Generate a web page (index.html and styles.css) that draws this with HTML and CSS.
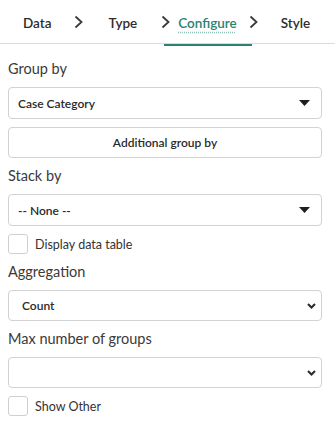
FILE: index.html
```html
<!DOCTYPE html>
<html lang="en">
<head>
  <meta charset="UTF-8">
  <title>Configure</title>
  <meta name="viewport" content="width=device-width, initial-scale=1.0">
  <link rel="stylesheet" href="styles.css">
</head>
<body>
  <nav class="steps">
    <span class="step">Data</span>
    <svg class="chev" width="9" height="14" viewBox="0 0 9 14"><path d="M1.5 1.5 L7.5 7 L1.5 12.5"/></svg>
    <span class="step">Type</span>
    <svg class="chev" width="9" height="14" viewBox="0 0 9 14"><path d="M1.5 1.5 L7.5 7 L1.5 12.5"/></svg>
    <span class="step active">Configure</span>
    <svg class="chev" width="9" height="14" viewBox="0 0 9 14"><path d="M1.5 1.5 L7.5 7 L1.5 12.5"/></svg>
    <span class="step">Style</span>
  </nav>

  <main class="form">
    <label class="lbl">Group by</label>
    <div class="field">
      <span class="val">Case Category</span>
      <svg class="caret" width="11" height="6" viewBox="0 0 11 6"><path d="M0 0 H11 L5.5 6 Z"/></svg>
    </div>
    <button class="btn">Additional group by</button>

    <label class="lbl">Stack by</label>
    <div class="field">
      <span class="val">-- None --</span>
      <svg class="caret" width="11" height="6" viewBox="0 0 11 6"><path d="M0 0 H11 L5.5 6 Z"/></svg>
    </div>
    <div class="check"><span class="box"></span>Display data table</div>

    <label class="lbl">Aggregation</label>
    <div class="field native">
      <span class="val">Count</span>
      <svg class="chevdown" width="9" height="6" viewBox="0 0 9 6"><path d="M1 1 L4.5 4.5 L8 1"/></svg>
    </div>

    <label class="lbl">Max number of groups</label>
    <div class="field native">
      <span class="val"></span>
      <svg class="chevdown" width="9" height="6" viewBox="0 0 9 6"><path d="M1 1 L4.5 4.5 L8 1"/></svg>
    </div>
    <div class="check"><span class="box"></span>Show Other</div>
  </main>
</body>
</html>
```

FILE: styles.css
```css
* { box-sizing: border-box; }
html, body {
  margin: 0; padding: 0;
  background: #fff;
  font-family: "Lato", "Noto Sans", sans-serif;
  color: #333;
}

/* wizard steps */
.steps {
  display: flex; align-items: center;
  height: 44px;
  padding-left: 23px;
  border-bottom: 1px solid #dcdcdc;
}
.step {
  position: relative;
  font-size: 13.5px; font-weight: 600;
  color: #2d2d2d;
  line-height: 20px;
  margin-top: 2px;
}
.chev { fill: none; stroke: #3a3a3a; stroke-width: 1.8; flex: none; }
.steps .chev:nth-of-type(1) { margin: 0 26px 0 22px; }
.steps .chev:nth-of-type(2) { margin: 0 8px 0 24px; }
.steps .chev:nth-of-type(3) { margin: 0 23px 0 12px; }
.step.active {
  color: #2a8272;
  text-decoration: underline dotted #8fc3b8;
  text-underline-offset: 4px;
}
.step.active::after {
  content: "";
  position: absolute;
  left: -14px; right: -15px; bottom: -13px;
  height: 2px;
  background: #2a8272;
}

/* form */
.form {
  display: flex; flex-direction: column; gap: 8px;
  padding: 15px 13px 0 8px;
}
.lbl {
  font-size: 14.5px; line-height: 20px;
  color: #3a3a3a;
}
.field {
  display: flex; align-items: center; justify-content: space-between;
  height: 32px;
  padding: 0 11px 0 9px;
  border: 1px solid #d2d2d2; border-radius: 4px;
  background: #fff;
}
.field.native { height: 31px; padding: 0 5px 0 13px; }
.val { font-size: 12px; font-weight: 600; color: #2a2a2a; }
.caret { fill: #1e1e1e; }
.chevdown { fill: none; stroke: #2a2a2a; stroke-width: 2; }
.btn {
  height: 31px;
  border: 1px solid #d2d2d2; border-radius: 4px;
  background: #fff;
  font-family: inherit; font-size: 12px; font-weight: 600;
  color: #2a2a2a;
}
.check {
  display: flex; align-items: center; gap: 7px;
  height: 20px;
  font-size: 12.5px; color: #333;
}
.box {
  width: 20px; height: 20px;
  border: 1px solid #cfcfcf; border-radius: 3px;
  background: #fff;
}
```
